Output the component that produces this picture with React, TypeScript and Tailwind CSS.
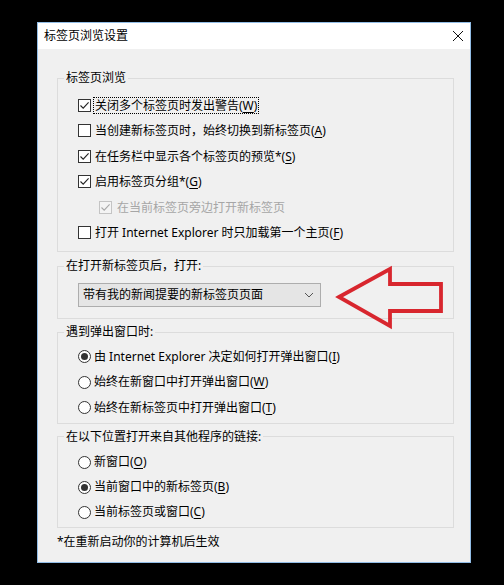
import React from "react";

const FONT = { fontFamily: '"Noto Sans", "Noto Sans CJK SC", sans-serif' };

function U({ children }: { children: React.ReactNode }) {
  return <span className="underline underline-offset-[2px] decoration-[1px]">{children}</span>;
}

function Check({ checked, disabled }: { checked?: boolean; disabled?: boolean }) {
  return (
    <span
      className={
        "w-[13px] h-[13px] shrink-0 border flex items-center justify-center " +
        (disabled ? "border-[#c4c4c4] bg-[#f4f4f4]" : "border-[#333333] bg-white")
      }
    >
      {checked && (
        <svg width="11" height="11" viewBox="0 0 11 11">
          <path
            d="M1.5 5.5 L4.2 8.2 L9.6 2.4"
            fill="none"
            stroke={disabled ? "#a8a8a8" : "#222222"}
            strokeWidth="1.1"
          />
        </svg>
      )}
    </span>
  );
}

function Radio({ checked }: { checked?: boolean }) {
  return (
    <span className="w-[13px] h-[13px] shrink-0 rounded-full border border-[#333333] bg-white flex items-center justify-center">
      {checked && <span className="w-[7px] h-[7px] rounded-full bg-[#333333]" />}
    </span>
  );
}

function CheckRow({
  checked,
  disabled,
  indent,
  focus,
  children,
}: {
  checked?: boolean;
  disabled?: boolean;
  indent?: boolean;
  focus?: boolean;
  children: React.ReactNode;
}) {
  return (
    <div className={"h-[25.5px] flex items-center " + (indent ? "pl-[21px]" : "")}>
      <Check checked={checked} disabled={disabled} />
      <span
        className={
          "ml-[2px] px-[1px] leading-[15px] whitespace-nowrap " +
          (disabled ? "text-[#a6a6a6] ml-[3px]" : "text-black") +
          (focus ? " border border-dotted border-black" : " border border-transparent")
        }
      >
        {children}
      </span>
    </div>
  );
}

function RadioRow({ checked, h, children }: { checked?: boolean; h: string; children: React.ReactNode }) {
  return (
    <div className={h + " flex items-center"}>
      <Radio checked={checked} />
      <span className="ml-[3px] whitespace-nowrap text-black leading-[16px]">{children}</span>
    </div>
  );
}

export default function App() {
  return (
    <div className="relative w-[504px] h-[585px] bg-black overflow-hidden pt-[22px] pl-[37px] text-[12px]" style={FONT}>
      <div className="w-[434px] h-[541px] border border-[#92bde6] bg-[#f0f0f0] flex flex-col">
        <div className="h-[26px] bg-white flex items-center justify-between pl-[6px] pr-[6px] shrink-0">
          <span className="text-black leading-[16px]">标签页浏览设置</span>
          <svg width="12" height="12" viewBox="0 0 12 12">
            <path d="M1 1 L11 11 M11 1 L1 11" stroke="#111" strokeWidth="1" fill="none" />
          </svg>
        </div>

        <div className="pl-[19px] pr-[16px] flex flex-col">
          <fieldset className="mt-[21px] border border-[#dcdcdc] pl-[20px] pt-[6.25px] pb-[5.75px]">
            <legend className="-ml-[14px] px-[2px] leading-[16px] text-black">标签页浏览</legend>
            <CheckRow checked focus>
              关闭多个标签页时发出警告(<U>W</U>)
            </CheckRow>
            <CheckRow>
              当创建新标签页时，始终切换到新标签页(<U>A</U>)
            </CheckRow>
            <CheckRow checked>
              在任务栏中显示各个标签页的预览*(<U>S</U>)
            </CheckRow>
            <CheckRow checked>
              启用标签页分组*(<U>G</U>)
            </CheckRow>
            <CheckRow checked disabled indent>
              在当前标签页旁边打开新标签页
            </CheckRow>
            <CheckRow>
              打开 Internet Explorer 时只加载第一个主页(<U>F</U>)
            </CheckRow>
          </fieldset>

          <fieldset className="mt-[6px] border border-[#dcdcdc] pl-[20px] pt-[9px] pb-[11px]">
            <legend className="-ml-[14px] px-[2px] leading-[16px] text-black">在打开新标签页后，打开:</legend>
            <div className="w-[243px] h-[24px] border border-[#adadad] bg-[#e5e5e5] flex items-center justify-between pl-[4px] pr-[6px]">
              <span className="text-black leading-[16px] whitespace-nowrap">带有我的新闻提要的新标签页页面</span>
              <svg width="10" height="6" viewBox="0 0 10 6">
                <path d="M1 1 L5 5 L9 1" stroke="#555" strokeWidth="1" fill="none" />
              </svg>
            </div>
          </fieldset>

          <fieldset className="mt-[5px] border border-[#dcdcdc] pl-[20px] pt-[4px] pb-[2px]">
            <legend className="-ml-[14px] px-[2px] leading-[16px] text-black">遇到弹出窗口时:</legend>
            <RadioRow checked h="h-[25.5px]">
              由 Internet Explorer 决定如何打开弹出窗口(<U>I</U>)
            </RadioRow>
            <RadioRow h="h-[25.5px]">
              始终在新窗口中打开弹出窗口(<U>W</U>)
            </RadioRow>
            <RadioRow h="h-[25.5px]">
              始终在新标签页中打开弹出窗口(<U>T</U>)
            </RadioRow>
          </fieldset>

          <fieldset className="mt-[5px] border border-[#dcdcdc] pl-[20px] pt-[5px] pb-[2px]">
            <legend className="-ml-[14px] px-[2px] leading-[16px] text-black">在以下位置打开来自其他程序的链接:</legend>
            <RadioRow h="h-[25px]">
              新窗口(<U>O</U>)
            </RadioRow>
            <RadioRow checked h="h-[25px]">
              当前窗口中的新标签页(<U>B</U>)
            </RadioRow>
            <RadioRow h="h-[25px]">
              当前标签页或窗口(<U>C</U>)
            </RadioRow>
          </fieldset>

          <div className="mt-[6px] leading-[16px] text-black">*在重新启动你的计算机后生效</div>
        </div>
      </div>

      <svg className="absolute left-0 top-0 pointer-events-none" width="504" height="585" viewBox="0 0 504 585">
        <path
          d="M339 297 L390 269 L390 284 L441 284 L441 311 L390 311 L390 326 Z"
          fill="none"
          stroke="#d8262e"
          strokeWidth="3.8"
          strokeLinejoin="miter"
        />
      </svg>
    </div>
  );
}
